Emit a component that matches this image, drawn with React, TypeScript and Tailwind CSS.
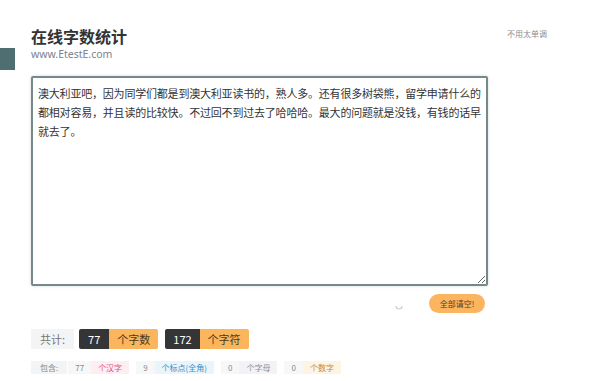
const text =
  "澳大利亚吧，因为同学们都是到澳大利亚读书的，熟人多。还有很多树袋熊，留学申请什么的都相对容易，并且读的比较快。不过回不到过去了哈哈哈。最大的问题就是没钱，有钱的话早就去了。";

function Tag({
  num,
  label,
  labelClass,
}: {
  num: string;
  label: string;
  labelClass: string;
}) {
  return (
    <div className="flex h-[13px] items-center text-[8px] leading-none">
      <span className="flex h-full items-center bg-[#f7f7f8] px-[7px] text-[#8a8a8a]">
        {num}
      </span>
      <span className={["flex h-full items-center px-[7px]", labelClass].join(" ")}>
        {label}
      </span>
    </div>
  );
}

export default function App() {
  return (
    <div
      className="relative h-[381px] w-[600px] overflow-hidden bg-white"
      style={{ fontFamily: '"Noto Sans CJK SC", "Noto Sans", sans-serif' }}
    >
      <div className="absolute left-0 top-[48px] h-[22px] w-[15px] bg-[#4f6e72]" />
      <div className="absolute right-[53px] top-[28px] text-[8px] text-[#8c8c8c]">
        不用太单调
      </div>

      <div className="flex flex-col pl-[31px] pt-[27px]">
        <h1 className="text-[16px] font-bold leading-[18px] text-[#333]">在线字数统计</h1>
        <p
          className="mt-[3px] text-[10.5px] leading-[12px] text-[#7d8290]"
          style={{ fontFamily: '"Noto Sans", sans-serif' }}
        >
          www.EtestE.com
        </p>

        <textarea
          readOnly
          value={text}
          className="mt-[16px] h-[210px] w-[457px] resize-y overflow-hidden rounded-[2px] border-2 border-[#768889] py-[6px] pl-[5px] pr-[1px] text-[11px] leading-[19px] tracking-[-0.2px] text-[#333] shadow-[0_0_3px_rgba(120,140,140,0.35)] outline-none"
        />

        <div className="mt-[8px] flex w-[457px] items-center justify-end">
          <svg width="10" height="10" viewBox="0 0 10 10" className="mr-[25px] mt-[4px]">
            <path d="M2 5a3 3 0 0 0 6 0" fill="none" stroke="#c9ced3" strokeWidth="1.2" />
          </svg>
          <button className="mr-[3px] flex h-[19px] w-[56px] items-center justify-center rounded-full bg-[#fbb561] text-[8px] text-[#5a3d1a]">
            全部请空!
          </button>
        </div>

        <div className="mt-[16px] flex h-[20px] items-stretch text-[11px]">
          <span className="flex items-center bg-[#f3f4f6] px-[9px] text-[#777]">共计:</span>
          <span className="ml-[5px] flex items-center rounded-l-[2px] bg-[#343536] px-[9px] text-white">
            77
          </span>
          <span className="flex items-center rounded-r-[2px] bg-[#fbb55c] px-[8px] text-[#4a3a20]">
            个字数
          </span>
          <span className="ml-[7px] flex items-center rounded-l-[2px] bg-[#343536] px-[8px] text-white">
            172
          </span>
          <span className="flex items-center rounded-r-[2px] bg-[#fbb55c] px-[8px] text-[#4a3a20]">
            个字符
          </span>
        </div>

        <div className="mt-[12px] flex items-center gap-[7px]">
          <span className="flex h-[13px] items-center bg-[#f3f4f6] px-[9px] text-[8px] leading-none text-[#888]">
            包含:
          </span>
          <div className="-ml-[6px]">
            <Tag num="77" label="个汉字" labelClass="bg-[#fdeef1] text-[#e0507a]" />
          </div>
          <Tag num="9" label="个标点(全角)" labelClass="bg-[#eaf4fb] text-[#3d8dc4]" />
          <Tag num="0" label="个字母" labelClass="bg-[#f2f3f5] text-[#8a8f96]" />
          <Tag num="0" label="个数字" labelClass="bg-[#fdf4e4] text-[#c08a3a]" />
        </div>
      </div>
    </div>
  );
}
